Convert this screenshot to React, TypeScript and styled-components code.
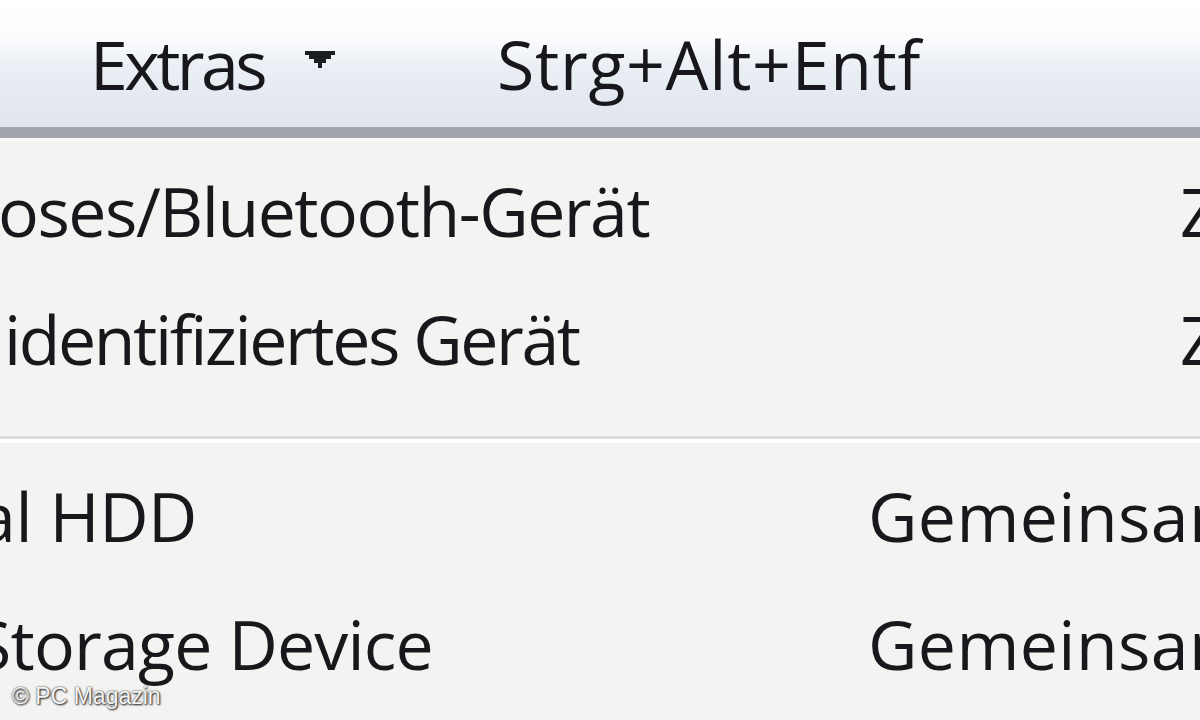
import styled, { createGlobalStyle } from "styled-components"

const GlobalStyle = createGlobalStyle`
  html, body {
    margin: 0;
    padding: 0;
    background: #f3f3f2;
  }
  body {
    width: 1200px;
    height: 720px;
    overflow: hidden;
  }
`

type Item = { name: string; clip?: number; tracking: number; detail: string }

const groups: { nameWidth: number; items: Item[] }[] = [
  {
    nameWidth: 1180,
    items: [
      { name: "oses/Bluetooth-Gerät", clip: 2, tracking: -1.5, detail: "Z" },
      { name: "identifiziertes Gerät", clip: -4, tracking: -2.4, detail: "Z" }
    ]
  },
  {
    nameWidth: 868,
    items: [
      { name: "al HDD", clip: 22, tracking: -0.4, detail: "Gemeinsam" },
      { name: "Storage Device", clip: 26, tracking: -0.8, detail: "Gemeinsam" }
    ]
  }
]

export default function App() {
  return (
    <Window>
      <GlobalStyle />
      <Toolbar>
        <MenuButton tracking={-3.6}>
          Extras
          <Arrow viewBox="0 0 30 17">
            <path d="M0 0H30V4H26V8H21V12H17V17H13V12H9V8H4V4H0Z" fill="#1b1d22" />
          </Arrow>
        </MenuButton>
        <MenuButton tracking={0.7}>Strg+Alt+Entf</MenuButton>
      </Toolbar>
      <List>
        {groups.map((group, g) => (
          <div key={g}>
            {g > 0 && <Separator />}
            {group.items.map((item, i) => (
              <Row key={i} nameWidth={group.nameWidth}>
                <Name>
                  <NameText clip={item.clip ?? 0} tracking={item.tracking}>
                    {item.name}
                  </NameText>
                </Name>
                <Detail>{item.detail}</Detail>
              </Row>
            ))}
          </div>
        ))}
      </List>
      <Watermark>© PC Magazin</Watermark>
    </Window>
  )
}

const Window = styled.div`
  position: relative;
  width: 1200px;
  height: 720px;
  overflow: hidden;
  background: #f3f3f2;
  font-family: "Open Sans", "Noto Sans", sans-serif;
  color: #18181c;
`

const Toolbar = styled.div`
  height: 138px;
  display: flex;
  align-items: flex-start;
  padding: 2px 0 0 90px;
  box-sizing: border-box;
  background: linear-gradient(
    to bottom,
    #ffffff 0%,
    #fbfcfd 30%,
    #ebeff5 52%,
    #e4e9f1 78%,
    #dfe4ee 100%
  );
  border-bottom: 11px solid transparent;
  border-image: linear-gradient(to bottom, #d8dbe0, #bcc0c5 40%, #a2a6ac 100%) 1;
  box-shadow: 0 3px 0 #fbfbfb;
`

const MenuButton = styled.div<{ tracking: number }>`
  display: flex;
  align-items: center;
  font-size: 68px;
  line-height: 124px;
  letter-spacing: ${(p) => p.tracking}px;
  white-space: nowrap;
  margin-right: 162px;
`

const Arrow = styled.svg`
  width: 30px;
  height: 17px;
  margin-left: 41px;
  margin-top: -10px;
`

const List = styled.div`
  padding-top: 9px;
`

const Row = styled.div<{ nameWidth: number }>`
  display: grid;
  grid-template-columns: ${(p) => p.nameWidth}px 1fr;
  height: 128px;
  font-size: 68px;
  line-height: 128px;
  white-space: nowrap;
`

const Name = styled.div`
  overflow: hidden;
`

const NameText = styled.span<{ clip: number; tracking: number }>`
  display: block;
  margin-left: ${(p) => -p.clip}px;
  letter-spacing: ${(p) => p.tracking}px;
`

const Detail = styled.div`
  overflow: hidden;
  letter-spacing: 0.4px;
`

const Separator = styled.div`
  margin: 33px 0 9px;
  height: 3px;
  background: #dcdcdc;
  border-bottom: 4px solid #fdfdfd;
`

const Watermark = styled.div`
  position: absolute;
  left: 12px;
  bottom: 10px;
  font-family: "Liberation Sans", Arial, sans-serif;
  font-size: 23px;
  color: #f4f4f4;
  text-shadow: 0 0 2px #333, 1px 1px 2px #222;
`
